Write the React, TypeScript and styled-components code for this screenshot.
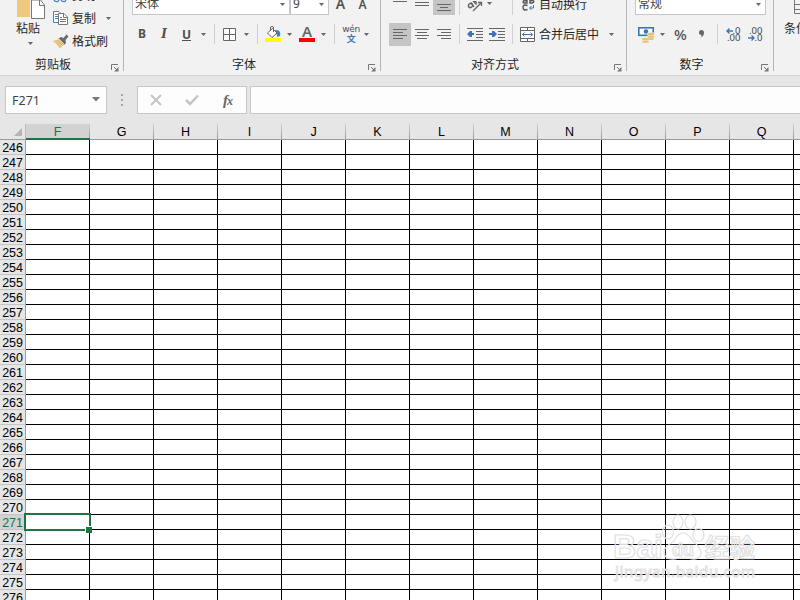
import React from 'react';
import styled, { createGlobalStyle, css } from 'styled-components';

const Global = createGlobalStyle`
  * { box-sizing: border-box; }
  body { margin: 0; overflow: hidden; }
`;

const Window = styled.div`
  width: 800px;
  height: 600px;
  overflow: hidden;
  position: relative;
  display: flex;
  flex-direction: column;
  background: #e6e6e6;
  font-family: 'Noto Sans', 'Noto Sans CJK SC', sans-serif;
  font-size: 12px;
  color: #262626;
`;

const Ribbon = styled.div`
  height: 76px;
  flex: none;
  display: flex;
  background: #f2f2f2;
  border-bottom: 1px solid #d2d2d2;
  overflow: hidden;
`;

const Group = styled.section<{ $w: number }>`
  width: ${p => p.$w}px;
  height: 71px;
  flex: none;
  display: flex;
  flex-direction: column;
  border-right: 1px solid #b5b5b5;
`;

const Tools = styled.div<{ $pad?: number; $top?: boolean }>`
  height: ${p => (p.$top ? 15 : 24)}px;
  margin-bottom: ${p => (p.$top ? 7 : 10)}px;
  padding-left: ${p => p.$pad ?? 8}px;
  display: flex;
  align-items: ${p => (p.$top ? 'flex-end' : 'center')};
`;

const GroupFooter = styled.div`
  height: 15px;
  display: flex;
  padding-right: 4px;
  line-height: 18px;
  text-align: center;
  white-space: nowrap;
`;

const FooterText = styled.span<{ $shift?: number }>`
  flex: 1;
  height: 15px;
  padding-right: ${p => p.$shift ?? 5}px;
`;

const Slot = styled.div<{ $w: number; $active?: boolean; $h?: number }>`
  width: ${p => p.$w}px;
  height: ${p => p.$h ?? 24}px;
  flex: none;
  display: flex;
  align-items: center;
  justify-content: center;
  ${p => p.$active && css`background: #c5c5c5;`}
  svg { flex: none; display: block; }
`;

const Divider = styled.div<{ $before?: number; $after?: number; $h?: number }>`
  width: 1px;
  height: ${p => p.$h ?? 20}px;
  margin: 0 ${p => p.$after ?? 8}px 0 ${p => p.$before ?? 4}px;
  background: #d0d0d0;
  flex: none;
`;

const Letter = styled.span<{ $weight?: number; $italic?: boolean; $under?: boolean; $size?: number }>`
  font: ${p => (p.$italic ? 'italic' : 'normal')} ${p => p.$weight ?? 400} ${p => p.$size ?? 12}px/14px
    ${p => (p.$italic ? "'DejaVu Serif'" : "'Noto Sans'")}, sans-serif;
  color: #505050;
  ${p => p.$under && css`border-bottom: 1px solid #505050; height: 13px; line-height: 13px;`}
`;

const Label = styled.span`
  line-height: 16px;
  padding-top: 1px;
  white-space: nowrap;
  font-size: 12px;
`;

const Combo = styled.div<{ $w: number }>`
  width: ${p => p.$w}px;
  height: 24px;
  flex: none;
  display: flex;
  align-items: center;
  justify-content: space-between;
  padding: 2px 4px 0 2px;
  border: 1px solid #c6c6c6;
  background: #fff;
  color: #444;
  line-height: 16px;
`;

const ClipboardBody = styled.div`
  height: 56px;
  display: flex;
`;
const PasteButton = styled.div`
  width: 49px;
  padding-left: 16px;
  display: flex;
  flex-direction: column;
  line-height: 16px;
  svg { display: block; }
`;
const PasteText = styled.span`
  margin-top: 2px;
  height: 21px;
`;
const PasteArrow = styled.span`
  padding-left: 12px;
`;
const ClipList = styled.div`
  display: flex;
  flex-direction: column;
  padding-left: 4px;
`;
const ClipItem = styled.div<{ $h: number }>`
  height: ${p => p.$h}px;
  display: flex;
  align-items: flex-end;
  gap: 3px;
  line-height: 14px;
  white-space: nowrap;
  svg { flex: none; }
`;
const CopyArrow = styled.span`
  display: flex;
  padding: 0 0 6px 7px;
`;

const Arrow = () => (
  <svg width="5" height="3" viewBox="0 0 5 3"><path d="M0 0H5L2.500 3Z" fill="#666" /></svg>
);
const Launcher = () => (
  <svg width="8" height="16" viewBox="0 0 8 16" fill="none" stroke="#777">
    <path d="M.5 14V8.500H7" /><path d="M3 11l3 3" /><path d="M7.500 11v4.500H3Z" fill="#777" stroke="none" />
  </svg>
);
const Lines = ({ rows, h = 11 }: { rows: [number, number][]; h?: number }) => (
  <svg width="14" height={h} viewBox={`0 0 14 ${h}`}>
    {rows.map(([x, w], i) => <rect key={i} x={x} y={i * 3} width={w} height="1" fill="#666" />)}
  </svg>
);
const PasteIcon = () => (
  <svg width="30" height="19" viewBox="0 0 30 19">
    <path d="M1 0H14V17H1Z" fill="#edc87e" />
    <path d="M15.500 0H24.500L28.500 5V18.500H15.500Z" fill="#fff" stroke="#777" />
    <path d="M23.500 0V5.500H28.500" fill="none" stroke="#777" />
  </svg>
);
const ScissorsIcon = () => (
  <svg width="16" height="3" viewBox="0 0 16 3" fill="none" stroke="#4a7ebb" strokeWidth="1.300">
    <path d="M1 0Q2 2 5 1.500L6 0M8 0Q9 2 12 1.500L13 0" />
  </svg>
);
const CopyIcon = () => (
  <svg width="16" height="15" viewBox="0 0 16 15" fill="#fff" stroke="#777">
    <path d="M.5.5H6L8.500 3V11.500H.5Z" />
    <path d="M2 3.500H5M2 5.500H5M2 7.500H5" stroke="#4a7ebb" />
    <path d="M5.500 2.500H11L14.500 6V13.500H5.500Z" /><path d="M10.500 3V6.500H14" fill="none" />
    <path d="M7 6.500H9M7 8.500H13M7 10.500H13" stroke="#4a7ebb" />
  </svg>
);
const BrushIcon = () => (
  <svg width="16" height="15" viewBox="0 0 16 15">
    <path d="M0 7L6 5L11 10L7 14.500Q4 10 0 7Z" fill="#e9c27c" />
    <path d="M5.500 4.500L8 3L10.500 4L13.500 .5L15.500 2.500L12.500 6L13 9L11 11Z" fill="#6a6a6a" />
    <path d="M6 5L11 10" stroke="#f2f2f2" strokeWidth=".8" />
  </svg>
);
const BorderIcon = () => (
  <svg width="14" height="13" viewBox="0 0 14 13" fill="#fff" stroke="#666">
    <path d="M.5.5H12.500V12.500H.5ZM6.500.5V12.500M.5 6.500H12.500" />
  </svg>
);
const FillIcon = () => (
  <svg width="16" height="16" viewBox="0 0 16 16">
    <path d="M10 4Q16.500 3.500 15 10L12.500 11Z" fill="#4a7ebb" />
    <path d="M2.500 7L7.500 2.500L12 7L7 11.500Z" fill="#fff" stroke="#666" />
    <path d="M5.500 5V1Q7 0 8.500 1V6" fill="none" stroke="#666" />
    <rect y="12" width="16" height="4" fill="#ff0" />
  </svg>
);
const FontColor = styled.div`
  width: 16px;
  height: 16px;
  border-bottom: 4px solid #f00;
  color: #666;
  font: 600 15px/11px 'Noto Sans', sans-serif;
  text-align: center;
`;
const Phonetic = styled.div`
  width: 18px;
  height: 20px;
  display: flex;
  flex-direction: column;
  align-items: center;
  color: #505050;
  font: 9px/10px 'DejaVu Sans', sans-serif;
  letter-spacing: -0.3px;
`;
const PhoneticGlyph = styled.b`
  font: 700 9px/10px 'Noto Sans CJK SC', sans-serif;
  color: #3c75b5;
`;
const IndentIcon = ({ right }: { right?: boolean }) => (
  <svg width="16" height="13" viewBox="0 0 16 13">
    <path d="M0 .5H16M9 3.500H16M9 6.500H16M9 9.500H16M0 12.500H16" stroke="#666" />
    {right
      ? <path d="M0 5H3V3H5L8 6L5 9H3V7H0Z" fill="#3c75b5" />
      : <path d="M7 5H5V3H3L0 6L3 9H5V7H7Z" fill="#3c75b5" />}
  </svg>
);
const MergeIcon = () => (
  <svg width="15" height="15" viewBox="0 0 15 15" fill="none" stroke="#666">
    <path d="M.5.5H14.500V14.500H.5Z" fill="#fff" />
    <path d="M0 3.500H15M0 11.500H15M7.500 0V3M7.500 12V15" />
    <path d="M2.500 7.500H12.500M4.500 5.500L2.500 7.500L4.500 9.500M10.500 5.500L12.500 7.500L10.500 9.500" stroke="#3c75b5" />
  </svg>
);
const OrientationIcon = () => (
  <svg width="17" height="11" viewBox="0 0 17 11" fill="none" stroke="#666">
    <ellipse cx="3.500" cy="4.500" rx="2.200" ry="1.900" transform="rotate(-40 3.500 4.500)" strokeWidth="1.500" />
    <path d="M4 1.500L7 6M6 0L9 3Q10 0 7 0M6 10L14.500 1.500M11 1.500H14.500V5" strokeWidth="1.300" />
  </svg>
);
const WrapIcon = () => (
  <svg width="14" height="11" viewBox="0 0 14 11" fill="none" stroke="#555" strokeWidth="1.400">
    <path d="M5 0V3H2Q0 2 2 .7H5M8 0V3H10Q13 2 11 .5H8M5.500 5.500Q1 4 1 7.500Q1 11 5.500 9.500" />
    <path d="M11.500 5V8H8M9.500 6L7.500 8L9.500 10" stroke="#3c75b5" strokeWidth="1" />
  </svg>
);
const MoneyIcon = () => (
  <svg width="17" height="17" viewBox="0 0 17 17">
    <rect x=".8" y="1.800" width="14.400" height="7.500" fill="#fff" stroke="#3c75b5" strokeWidth="1.600" />
    <circle cx="8" cy="5.500" r="2.300" fill="#3c75b5" />
    <path d="M9.500 6.500H17v8h-6v3H4v-6h5.500Z" fill="#f2f2f2" />
    <g fill="#e9bf78">
      <ellipse cx="13" cy="8" rx="3.400" ry="1.300" />
      <ellipse cx="13" cy="10.700" rx="3.400" ry="1.100" />
      <ellipse cx="13" cy="13" rx="3" ry=".9" />
      <ellipse cx="7.500" cy="13.200" rx="3.500" ry="1.100" />
      <ellipse cx="7.500" cy="15.700" rx="3.500" ry="1.100" />
    </g>
  </svg>
);
const CommaIcon = () => (
  <svg width="6" height="8" viewBox="0 0 6 8">
    <path d="M0 2.500Q0 0 2.500 0Q5 0 5 3Q5 6.500 1 7.500Q3 6 2.500 5Q0 5 0 2.500Z" fill="#666" />
  </svg>
);
const Decimal = styled.div`
  width: 15px;
  display: flex;
  flex-direction: column;
  align-items: flex-end;
  color: #444;
  font: 9.500px/7px 'Noto Sans', sans-serif;
`;
const DecimalLine = styled.span`
  display: flex;
  align-items: center;
  height: 7px;
`;
const SmallArrow = ({ right }: { right?: boolean }) => (
  <svg width="7" height="6" viewBox="0 0 7 6" fill="none" stroke="#3c75b5" strokeWidth="1.400">
    {right ? <path d="M0 3H6M3.500 .5L6 3L3.500 5.500" /> : <path d="M1 3H7M3.500 .5L1 3L3.500 5.500" />}
  </svg>
);
const StyleGroup = styled.div`
  flex: 1;
  padding-left: 10px;
  display: flex;
  flex-direction: column;
  gap: 7px;
  white-space: nowrap;
  line-height: 16px;
`;
const StyleIcon = () => (
  <svg width="16" height="14" viewBox="0 0 16 14">
    <path d="M10.500 0V13.500H16M10 4.500H16M10 9.500H16" fill="none" stroke="#777" />
  </svg>
);

const FormulaBar = styled.div`
  height: 48px;
  flex: none;
  display: flex;
  padding: 10px 0 0 5px;
`;
const Field = styled.div<{ $w: number; $gap?: number }>`
  width: ${p => p.$w}px;
  height: 28px;
  flex: none;
  margin-right: ${p => p.$gap ?? 0}px;
  display: flex;
  align-items: center;
  border: 1px solid #c6c6c6;
  background: #fdfdfd;
`;
const NameText = styled.span`
  width: 85px;
  padding-left: 6px;
  font-size: 12.500px;
  color: #444;
`;
const Grip = styled.div`
  width: 30px;
  height: 28px;
  flex: none;
  display: flex;
  flex-direction: column;
  align-items: center;
  justify-content: center;
  gap: 3px;
`;
const Dot = styled.i`
  width: 2px;
  height: 2px;
  background: #a6a6a6;
`;
const Fx = styled.span`
  font: italic 700 15px/18px 'Liberation Serif', serif;
  color: #666;
  small { font-size: 12px; margin-left: -1px; }
`;

const ColumnHeads = styled.div`
  height: 16px;
  flex: none;
  display: flex;
  border-bottom: 1px solid #9b9b9b;
`;
const Corner = styled.div`
  width: 26px;
  flex: none;
  display: flex;
  justify-content: flex-end;
  align-items: flex-end;
  padding: 0 3px 3px 0;
  border-right: 1px solid #bbb;
`;
const ColumnHead = styled.div<{ $on?: boolean }>`
  width: 64px;
  height: ${p => (p.$on ? 16 : 15)}px;
  flex: none;
  padding-right: 1px;
  text-align: center;
  font: 12.500px/16px 'Liberation Sans', sans-serif;
  color: ${p => (p.$on ? '#217346' : '#000')};
  background: linear-gradient(#d0d0d0, #999) right / 1px 100% no-repeat ${p => (p.$on ? '#d2d2d2' : '#e6e6e6')};
  ${p => p.$on && css`border-bottom: 2px solid #217346;`}
`;
const Sheet = styled.div`
  flex: none;
  display: flex;
  flex-direction: column;
`;
const SheetRow = styled.div`
  height: 15px;
  flex: none;
  display: grid;
  grid-template-columns: 26px repeat(13, 64px);
`;
const RowHead = styled.div<{ $on?: boolean }>`
  border-right: 1px solid #9b9b9b;
  border-bottom: 1px solid #c4c4c4;
  background: ${p => (p.$on ? '#d2d2d2' : '#e6e6e6')};
  color: ${p => (p.$on ? '#217346' : '#000')};
  font: 12.500px/16px 'Liberation Sans', sans-serif;
  padding-right: 2px;
  text-align: right;
  height: 15px;
`;
const Cell = styled.div`
  position: relative;
  background: #fff;
  border-right: 1px solid #000;
  border-bottom: 1px solid #000;
`;
const Selection = styled.div`
  position: absolute;
  z-index: 1;
  left: -2px;
  top: -2px;
  width: 67px;
  height: 18px;
  border: 2px solid #217346;
  &::after {
    content: '';
    position: absolute;
    right: -3px;
    bottom: -4px;
    width: 6px;
    height: 6px;
    background: #217346;
    border: solid #fff;
    border-width: 1px 0 0 1px;
  }
`;
const Watermark = styled.svg`
  position: absolute;
  z-index: 2;
  left: 608px;
  top: 510px;
`;

const columns = 'FGHIJKLMNOPQR'.split('');
const rows = Array.from({ length: 31 }, (_, i) => 246 + i);

export default function App() {
  return (
    <Window>
      <Global />
      <Ribbon>
        <Group $w={124}>
          <ClipboardBody>
            <PasteButton>
              <PasteIcon />
              <PasteText>粘贴</PasteText>
              <PasteArrow><Arrow /></PasteArrow>
            </PasteButton>
            <ClipList>
              <ClipItem $h={3}><ScissorsIcon />剪切</ClipItem>
              <ClipItem $h={23}><CopyIcon />复制<CopyArrow><Arrow /></CopyArrow></ClipItem>
              <ClipItem $h={23}><BrushIcon />格式刷</ClipItem>
            </ClipList>
          </ClipboardBody>
          <GroupFooter><FooterText $shift={5}>剪贴板</FooterText><Launcher /></GroupFooter>
        </Group>

        <Group $w={257}>
          <Tools $top>
            <Combo $w={158}>宋体<Arrow /></Combo>
            <Combo $w={39}>9<Arrow /></Combo>
            <Slot $w={23} $h={22}><Letter $size={14} $weight={600}>A</Letter></Slot>
            <Slot $w={21} $h={20}><Letter $size={12} $weight={600}>A</Letter></Slot>
          </Tools>
          <Tools $pad={7}>
            <Slot $w={22}><Letter $weight={700}>B</Letter></Slot>
            <Slot $w={22}><Letter $italic $weight={700}>I</Letter></Slot>
            <Slot $w={23}><Letter $weight={700} $under>U</Letter></Slot>
            <Slot $w={11}><Arrow /></Slot>
            <Divider $before={5} />
            <Slot $w={14}><BorderIcon /></Slot>
            <Slot $w={19}><Arrow /></Slot>
            <Divider $before={1} $after={7} />
            <Slot $w={16}><FillIcon /></Slot>
            <Slot $w={17}><Arrow /></Slot>
            <Slot $w={18}><FontColor>A</FontColor></Slot>
            <Slot $w={15}><Arrow /></Slot>
            <Divider $before={3} $after={7} />
            <Slot $w={18}><Phonetic>wén<PhoneticGlyph>文</PhoneticGlyph></Phonetic></Slot>
            <Slot $w={13}><Arrow /></Slot>
          </Tools>
          <GroupFooter><FooterText $shift={4}>字体</FooterText><Launcher /></GroupFooter>
        </Group>

        <Group $w={246}>
          <Tools $top>
            <Slot $w={22} $h={15}><Lines rows={[[0, 14]]} h={13} /></Slot>
            <Slot $w={22} $h={15}><Lines rows={[[0, 14], [0, 14]]} h={11} /></Slot>
            <Slot $w={22} $h={15} $active><Lines rows={[[0, 14], [3, 8], [0, 14]]} h={7} /></Slot>
            <Divider $h={15} $after={7} />
            <Slot $w={17} $h={18}><OrientationIcon /></Slot>
            <Slot $w={11} $h={23}><Arrow /></Slot>
            <Divider $h={15} $before={17} $after={8} />
            <Slot $w={15} $h={19}><WrapIcon /></Slot>
            <Slot $w={54} $h={22}><Label>自动换行</Label></Slot>
          </Tools>
          <Tools>
            <Slot $w={22} $h={23} $active><Lines rows={[[0, 14], [0, 10], [0, 14], [0, 10]]} /></Slot>
            <Slot $w={22}><Lines rows={[[0, 14], [2, 10], [0, 14], [2, 10]]} /></Slot>
            <Slot $w={22}><Lines rows={[[0, 14], [4, 10], [0, 14], [4, 10]]} /></Slot>
            <Divider $after={7} />
            <Slot $w={16}><IndentIcon /></Slot>
            <Slot $w={28}><IndentIcon right /></Slot>
            <Divider $before={1} $after={7} />
            <Slot $w={15}><MergeIcon /></Slot>
            <Slot $w={68}><Label>合并后居中</Label></Slot>
            <Slot $w={16}><Arrow /></Slot>
          </Tools>
          <GroupFooter><FooterText $shift={5}>对齐方式</FooterText><Launcher /></GroupFooter>
        </Group>

        <Group $w={147}>
          <Tools $top><Combo $w={131}>常规<Arrow /></Combo></Tools>
          <Tools $pad={11}>
            <Slot $w={17}><MoneyIcon /></Slot>
            <Slot $w={14}><Arrow /></Slot>
            <Slot $w={23}><Letter $size={15} $weight={500}>%</Letter></Slot>
            <Slot $w={19}><CommaIcon /></Slot>
            <Divider $before={6} $after={7} />
            <Slot $w={16}><Decimal><DecimalLine><SmallArrow />.0</DecimalLine><DecimalLine>.00</DecimalLine></Decimal></Slot>
            <Slot $w={28}><Decimal><DecimalLine>.00</DecimalLine><DecimalLine><SmallArrow right />.0</DecimalLine></Decimal></Slot>
          </Tools>
          <GroupFooter><FooterText $shift={5}>数字</FooterText><Launcher /></GroupFooter>
        </Group>
        <StyleGroup><StyleIcon />条件格式</StyleGroup>
      </Ribbon>

      <FormulaBar>
        <Field $w={102}>
          <NameText>F271</NameText>
          <svg width="9" height="6" viewBox="0 0 9 6"><path d="M1 0H9L5 4.500Z" fill="#777" /></svg>
        </Field>
        <Grip><Dot /><Dot /><Dot /></Grip>
        <Field $w={110} $gap={3}>
          <Slot $w={36}><svg width="12" height="12" viewBox="0 0 12 12"><path d="M1 1L11 11M11 1L1 11" stroke="#c4c4c4" strokeWidth="2" /></svg></Slot>
          <Slot $w={36}><svg width="14" height="12" viewBox="0 0 14 12"><path d="M1 6L5 10L13 1.500" fill="none" stroke="#c4c4c4" strokeWidth="2.500" /></svg></Slot>
          <Slot $w={36}><Fx>f<small>x</small></Fx></Slot>
        </Field>
        <Field $w={560} />
      </FormulaBar>

      <ColumnHeads>
        <Corner><svg width="8" height="8" viewBox="0 0 8 8"><path d="M8 0V8H0Z" fill="#b5b5b5" /></svg></Corner>
        {columns.map(c => <ColumnHead key={c} $on={c === 'F'}>{c === 'R' ? '' : c}</ColumnHead>)}
      </ColumnHeads>
      <Sheet>
        {rows.map(r => (
          <SheetRow key={r}>
            <RowHead $on={r === 271}>{r}</RowHead>
            {columns.map(c => <Cell key={c}>{r === 271 && c === 'F' && <Selection />}</Cell>)}
          </SheetRow>
        ))}
      </Sheet>

      <Watermark width="160" height="75" viewBox="0 0 160 75" fill="#fff" fillOpacity=".2" stroke="#e0e0e0" strokeWidth="1.200">
        <ellipse cx="70" cy="12" rx="5" ry="7" />
        <ellipse cx="82.500" cy="12" rx="5.500" ry="7" />
        <ellipse cx="60" cy="22" rx="5.500" ry="7" />
        <ellipse cx="90.500" cy="25" rx="5.500" ry="6.500" />
        <path d="M75 23Q80 23 84 30Q93 38 93 42Q93 50 84 49Q75 47 67 49Q55 50 56 40Q58 36 66 31Q70 23 75 23Z" />
        <g fontFamily="'Liberation Sans', sans-serif" fontWeight="700">
          <text x="5" y="48" fontSize="33" textLength="50" lengthAdjust="spacingAndGlyphs">Bai</text>
          <text x="64" y="46" fontSize="19" textLength="22" lengthAdjust="spacingAndGlyphs">du</text>
        </g>
        <text x="97" y="47" fontSize="25" fontFamily="'Noto Sans CJK SC', sans-serif" fontWeight="700" textLength="50">经验</text>
        <text x="7" y="67" fontSize="15" fontFamily="'Noto Sans', sans-serif" textLength="140" strokeWidth="1">jingyan.baidu.com</text>
      </Watermark>
    </Window>
  );
}
